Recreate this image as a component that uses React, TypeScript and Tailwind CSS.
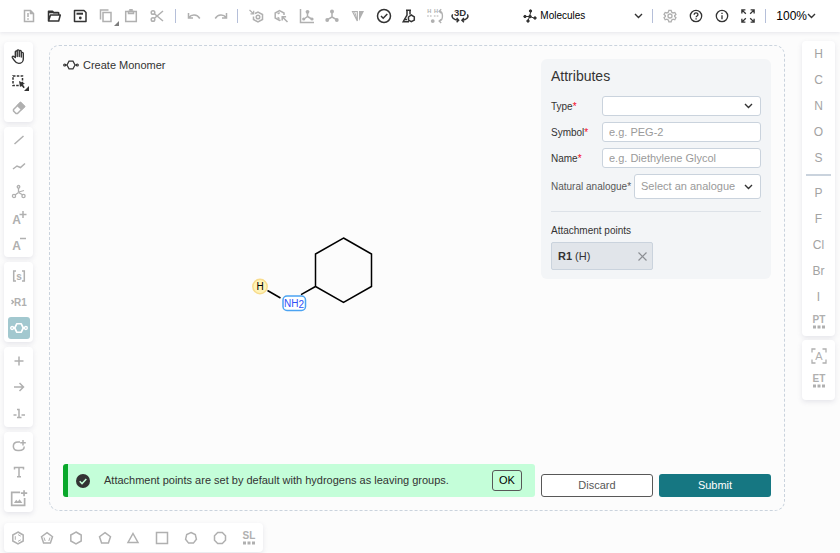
import React from 'react';

type IconProps = { children: React.ReactNode; size?: number; className?: string };

function Icon({ children, size = 16, className = '' }: IconProps) {
  return (
    <svg
      width={size}
      height={size}
      viewBox="0 0 16 16"
      fill="none"
      stroke="currentColor"
      strokeWidth="1.5"
      className={`block shrink-0 ${className}`}
      aria-hidden="true"
    >
      {children}
    </svg>
  );
}

type Tool = { name: string; icon: React.ReactNode; enabled?: boolean; active?: boolean; menu?: 'edge' | 'inset' };

function ToolButton({ tool, className }: { tool: Tool; className: string }) {
  const tone = tool.active ? 'text-white' : tool.enabled ? 'text-[#333333]' : 'text-[#b0b0b0]';
  return (
    <button type="button" aria-label={tool.name} className={`relative flex items-center justify-center ${tone} ${className}`}>
      {tool.active ? (
        <span className="flex size-[22px] items-center justify-center rounded-[3px] bg-[#a2c8cf]">{tool.icon}</span>
      ) : (
        tool.icon
      )}
      {tool.menu && (
        <svg
          className={`absolute ${tool.menu === 'edge' ? 'right-0 bottom-0' : 'right-1 bottom-1'}`}
          width="5"
          height="5"
          viewBox="0 0 5 5"
          aria-hidden="true"
        >
          <path d="M5 0v5H0z" fill={tool.enabled ? '#333333' : '#7d7d7d'} />
        </svg>
      )}
    </button>
  );
}

const glyph = { fill: 'currentColor', stroke: 'none', fontFamily: 'Liberation Sans, Arial, sans-serif', textAnchor: 'middle' as const };

const monomer = (
  <Icon size={18}>
    <path d="M4.2 8l1.9-3.8h3.8L11.8 8l-1.9 3.8H6.1z" strokeLinejoin="round" />
    <circle cx="1.9" cy="8" r="1.3" strokeWidth="1.2" />
    <circle cx="14.1" cy="8" r="1.3" strokeWidth="1.2" />
    <path d="M3.2 8h1M11.8 8h1" />
  </Icon>
);

const fileTools: Tool[] = [
  { name: 'Clear canvas', icon: <Icon><path d="M3.5 2.5h6l3 3v8h-9zM9.5 2.5v3h3" /><path d="M7 5v4M7 10.3v1.5" /></Icon> },
  { name: 'Open', enabled: true, icon: <Icon><path d="M2.5 13V3.2h4l1.2 1.5h5v2M2.5 13L4.5 7h9.8L12.7 13z" strokeLinejoin="round" /><path d="M2.5 4.5h10" /></Icon> },
  { name: 'Save', enabled: true, icon: <Icon><path d="M2.5 2.5h9.5l2 2v9H2.5z" strokeLinejoin="round" /><path d="M4.5 5.7h6.5" strokeWidth="2" /><circle cx="8.3" cy="10" r="1.4" fill="currentColor" stroke="none" /></Icon> },
  { name: 'Copy', menu: 'edge', icon: <Icon><path d="M5 4.5h8v9H5z" /><path d="M2.5 11.5V2h8" /></Icon> },
  { name: 'Paste', icon: <Icon><path d="M2.7 3.5h10.6v10H2.7z" /><path d="M5.5 3.5h5v2h-5zM7 3V1.7h2V3" /></Icon> },
  { name: 'Cut', icon: <Icon><circle cx="4" cy="4.5" r="1.8" /><circle cx="4" cy="11.5" r="1.8" /><path d="M5.4 5.7L14 13M5.4 10.3L14 3" /></Icon> },
];

const historyTools: Tool[] = [
  { name: 'Undo', icon: <Icon><path d="M2.5 5v5h4.5M2.7 9.7C5.5 6 11 6 13.8 10.5" /></Icon> },
  { name: 'Redo', icon: <Icon><path d="M13.5 5v5H9M13.3 9.7C10.5 6 5 6 2.2 10.5" /></Icon> },
];

const structureTools: Tool[] = [
  { name: 'Aromatize', icon: <Icon><path d="M7 5.5l3-1.5 4.5 2.5v5L10 14 5.5 11.5V8.5" /><circle cx="10" cy="9" r="1.8" /><path d="M1.5 2l4 3.7M5.7 2.7v3.2H2.5" strokeWidth="1.2" /></Icon> },
  { name: 'Dearomatize', icon: <Icon><path d="M7.5 12L6.5 12.5 2.2 10V5L6.5 2.5 11 5v2" /><path d="M4.7 5.9l2-1.3M4.5 9.5l2 1.2" /><path d="M14.5 14L9.5 9M9.2 12.5V8.7h3.9" /></Icon> },
  { name: 'Layout', icon: <Icon><path d="M1.5 1v13.5H15" /><path d="M8.5 5v4M8.5 8.5L5 11M8.5 8.5l4.2 2.5" /><g fill="currentColor" stroke="none"><circle cx="8.5" cy="3.8" r="1.9" /><circle cx="4.7" cy="11" r="1.6" /><circle cx="13" cy="11" r="1.6" /></g></Icon> },
  { name: 'Clean up', icon: <Icon><path d="M8 4.5V9M8 9l-4.5 2.7M8 9l4.5 2.7" /><g fill="currentColor" stroke="none"><circle cx="8" cy="3.5" r="2" /><circle cx="3.2" cy="12" r="1.9" /><circle cx="12.8" cy="12" r="1.9" /></g></Icon> },
  { name: 'Calculate CIP', icon: <Icon><path d="M2.5 3.5L7.3 13V3.5z" strokeWidth="1.2" /><path d="M4.5 3.5l2.5 8" strokeWidth="1" /><path d="M9 3h5L9 13z" fill="currentColor" stroke="none" /></Icon> },
  { name: 'Check structure', enabled: true, icon: <Icon><circle cx="8" cy="8" r="6.5" /><path d="M5 8l2.2 2.2L11.3 6" /></Icon> },
  { name: 'Calculated values', enabled: true, icon: <Icon><path d="M5 2.2h5M6 2.5V7L2.2 13.7H8M9 2.5v4" /><path d="M3.5 11.5H6" /><path d="M7.5 9l2.8-2 3 1.8v3.3l-3 1.6-2.8-1.6z" /></Icon> },
  { name: 'Hydrogens', icon: <Icon size={18}><text x="3" y="5.5" fontSize="5" fontWeight="bold" {...glyph}>H</text><text x="9" y="5.5" fontSize="5" fontWeight="bold" {...glyph}>H</text><path d="M1 8h4M7 8h4" strokeDasharray="1.5 1" strokeWidth="1" /><circle cx="6" cy="12.5" r="1.7" fill="currentColor" stroke="none" /><path d="M12 4c3.5 0 3.5 8 0 8.5M13.5 2L11.7 4l2 1.5M13.5 11l-1.8 1.5 1.8 1.7" strokeWidth="1.2" /></Icon> },
  { name: '3D viewer', enabled: true, icon: <Icon size={18}><text x="8" y="8" fontSize="8.5" fontWeight="bold" {...glyph}>3D</text><path d="M1.5 6.5C-.3 9 2.5 11.5 6.5 11.7M14.5 6.5c1.8 2.5-1 5-4.5 5.2M5 9.8l1.8 2L5 13.5M11.5 9.8l-1.8 2 1.8 1.7" strokeWidth="1.3" /></Icon> },
];

const dots = <path d="M2 13h12" stroke="currentColor" strokeWidth="3" strokeDasharray="3 1.5" />;

const leftGroups: Tool[][] = [
  [
    { name: 'Hand', enabled: true, icon: <Icon size={17}><path d="M5 9V3.7c0-1.3 1.8-1.3 1.8 0V8 2.7c0-1.3 1.9-1.3 1.9 0V8 3.3c0-1.2 1.9-1.2 1.9 0V8.5 5c0-1.2 1.9-1.2 1.9 0v5.5c0 2-1.7 4-4.3 4-2.2 0-3-1-4.2-2.8L2.2 9c-.5-1.2.7-1.7 1.4-1z" strokeWidth="1.3" strokeLinejoin="round" /></Icon> },
    { name: 'Rectangle selection', enabled: true, menu: 'inset', icon: <Icon><path d="M2 2h9.5v9.5H2z" strokeDasharray="2.5 1.3" /><path d="M8 7l6 2.7-2.2.8 2 2.7-1.3 1-2-2.7-1.5 1.6z" fill="currentColor" stroke="none" /></Icon> },
    { name: 'Erase', icon: <Icon><path d="M2.5 9.5l7-7 4 4-7 7h-1.5L2.5 11z" strokeLinejoin="round" /><path d="M6.5 5.5l3-3 4 4-3 3z" fill="currentColor" /></Icon> },
  ],
  [
    { name: 'Single bond', icon: <Icon><path d="M3.5 12l9-8" /></Icon> },
    { name: 'Chain', icon: <Icon><path d="M2 11l4-3 3.5 1.5L14 5.5" /></Icon> },
    { name: 'Stereochemistry', icon: <Icon><g strokeWidth="1.3"><path d="M7.5 4v4M7.5 8.5L4 11M7.5 8.5L12 11M8 8l5-1.5" /><circle cx="7.5" cy="2.8" r="1.3" /><circle cx="3" cy="12" r="1.6" /><circle cx="12.5" cy="12" r="1.6" /></g></Icon> },
    { name: 'Charge plus', icon: <Icon><text x="5.5" y="14" fontSize="12" fontWeight="bold" {...glyph}>A</text><path d="M12 1v7M8.5 4.500h7" /></Icon> },
    { name: 'Charge minus', icon: <Icon><text x="5.5" y="14" fontSize="12" fontWeight="bold" {...glyph}>A</text><path d="M9 2.5h6" /></Icon> },
  ],
  [
    { name: 'S-Group', icon: <Icon><path d="M5 3H2.7v10H5M11 3h2.3v10H11" /><text x="8" y="11.5" fontSize="10" fontWeight="bold" {...glyph}>s</text></Icon> },
    { name: 'R-Group label', icon: <Icon><path d="M.5 6l2 2-2 2" /><text x="9.5" y="12" fontSize="10" fontWeight="bold" {...glyph}>R1</text></Icon> },
    { name: 'Create monomer', active: true, icon: monomer },
  ],
  [
    { name: 'Reaction plus', icon: <Icon><path d="M8 3.5v9M3.5 8h9" /></Icon> },
    { name: 'Arrow', icon: <Icon><path d="M3 8h9.5M8.5 4l4 4-4 4" /></Icon> },
    { name: 'Reaction mapping', icon: <Icon><path d="M6 4.5h2v8M6 12.5h4.5M2.5 10h3M10.5 10H14" /></Icon> },
  ],
  [
    { name: 'Ellipse', icon: <Icon><path d="M9 4H7C.8 4 .8 12.5 7 12.5h1c3.500 0 5.2-1.7 5.2-4" /><path d="M12 2v5.5M9.2 4.7h5.6" /></Icon> },
    { name: 'Text', icon: <Icon><path d="M3.5 5.5V3.5h9v2M8 3.5v9M6 12.7h4" /></Icon> },
    { name: 'Image', icon: <Icon size={18}><path d="M9 3H1.5v11.5H13V8" /><path d="M12.5 1v5.5M9.7 3.7h5.6" /><path d="M3.5 12.5l2-3 1.5 1.5 1.5-2 2.5 3.5z" fill="currentColor" stroke="none" /></Icon> },
  ],
];

const templates: Tool[] = [
  { name: 'Benzene', icon: <Icon><path d="M8 2l5.2 3v6L8 14l-5.2-3V5z" /><path d="M5.300 6.200v3.600M8 4.600l2.800 1.600M8 11.400l2.800-1.600" strokeWidth="1" /></Icon> },
  { name: 'Cyclopentadiene', icon: <Icon><path d="M8 2.7l5.5 4-2.1 6.3H4.6L2.5 6.7z" /><path d="M5 7.5l1.200 3.500M11 7.5l-1.200 3.500" strokeWidth="1" /></Icon> },
  { name: 'Cyclohexane', icon: <Icon><path d="M8 2l5.2 3v6L8 14l-5.2-3V5z" /></Icon> },
  { name: 'Cyclopentane', icon: <Icon><path d="M8 2.7l5.5 4-2.1 6.3H4.6L2.5 6.7z" /></Icon> },
  { name: 'Cyclopropane', icon: <Icon><path d="M8 3.5l5 9H3z" /></Icon> },
  { name: 'Cyclobutane', icon: <Icon><path d="M2.5 2.5h11v11h-11z" /></Icon> },
  { name: 'Cycloheptane', icon: <Icon><path d="M8 2.5l4.3 2 1.1 4.7-3 3.9H5.600l-3-3.9 1.1-4.7z" /></Icon> },
  { name: 'Cyclooctane', icon: <Icon><path d="M5.7 2.5h4.6l3.2 3.2v4.6l-3.2 3.2H5.7l-3.2-3.2V5.7z" /></Icon> },
  { name: 'Structure library', icon: <Icon><text x="8" y="9" fontSize="10" fontWeight="bold" {...glyph}>SL</text>{dots}</Icon> },
];

function Chevron({ className = '' }: { className?: string }) {
  return (
    <svg width="9" height="6" viewBox="0 0 9 6" fill="none" stroke="#333333" strokeWidth="1.4" className={`pointer-events-none shrink-0 ${className}`} aria-hidden="true">
      <path d="M1 1l3.5 3.5L8 1" />
    </svg>
  );
}

const Divider = () => <span className="h-[14px] w-px bg-[#b5bfd9]" />;

function Header() {
  return (
    <header className="flex h-8 items-center justify-between bg-white pr-6 pl-4 shadow-[0_1px_4px_rgba(103,104,132,0.15)]">
      <div className="flex items-center">
        <div className="grid w-[154px] grid-cols-6">
          {fileTools.map((t) => <ToolButton key={t.name} tool={t} className="h-5" />)}
        </div>
        <span className="w-[5px]" />
        <Divider />
        <span className="w-1" />
        <div className="grid w-[54px] grid-cols-2">
          {historyTools.map((t) => <ToolButton key={t.name} tool={t} className="h-5" />)}
        </div>
        <span className="w-[3px]" />
        <Divider />
        <span className="w-[5px]" />
        <div className="grid w-[230px] grid-cols-9">
          {structureTools.map((t) => <ToolButton key={t.name} tool={t} className="h-5" />)}
        </div>
      </div>
      <div className="flex items-center">
        <svg width="14" height="14" viewBox="0 0 14 14" fill="#333333" stroke="#333333" aria-hidden="true">
          <path d="M1.5 7.5h5L8 2M6.5 7.5L5 12M7 7.5l5 2" fill="none" />
          <circle cx="7.5" cy="2" r="1.2" /><circle cx="2" cy="7.5" r="1.2" /><circle cx="7" cy="7.5" r="1.3" /><circle cx="5" cy="12" r="1.2" /><circle cx="12" cy="9" r="1.2" />
        </svg>
        <div className="relative flex items-center">
          <select aria-label="Mode" className="w-28 appearance-none bg-transparent pl-[3px] text-[10px] leading-4 text-black">
            <option>Molecules</option>
          </select>
          <Chevron className="absolute right-[6px]" />
        </div>
        <span className="w-[3px]" />
        <Divider />
        <div className="ml-1 flex">
          <button type="button" aria-label="Settings" className="flex w-[26px] justify-center text-[#b0b0b0]">
            <Icon size={14}>
              <path d="M6.7 1.5h2.6l.5 2 1.7 1 2-.6 1.3 2.3-1.5 1.4v1l1.5 1.4-1.3 2.3-2-.6-1.7 1-.5 2H6.7l-.5-2-1.7-1-2 .6-1.3-2.3 1.5-1.4v-1L1.200 6.2l1.3-2.3 2 .6 1.7-1z" />
              <circle cx="8" cy="8" r="2.3" />
            </Icon>
          </button>
          <button type="button" aria-label="Help" className="flex w-[26px] justify-center text-[#333333]">
            <Icon size={14}><circle cx="8" cy="8" r="6.5" /><path d="M5.9 6.7c0-2.9 4.3-2.9 4.3-.2 0 1.5-2.1 1.5-2.1 3M8.1 10.7v1.4" /></Icon>
          </button>
          <button type="button" aria-label="About" className="flex w-[26px] justify-center text-[#333333]">
            <Icon size={14}><circle cx="8" cy="8" r="6.5" /><path d="M8 7v4.7M8 4.3v1.5" /></Icon>
          </button>
          <button type="button" aria-label="Fullscreen" className="flex w-[26px] justify-center text-[#333333]">
            <Icon size={14}><path d="M1 5V1h4M1 1l4.5 4.5M11 1h4v4M15 1l-4.5 4.5M1 11v4h4M1 15l4.5-4.5M15 11v4h-4M15 15l-4.5-4.5" /></Icon>
          </button>
        </div>
        <span className="w-1" />
        <Divider />
        <button type="button" className="ml-[10px] flex items-center text-xs text-black">
          100%
          <Chevron />
        </button>
      </div>
    </header>
  );
}

const card = 'rounded bg-white shadow-[0_2px_5px_rgba(103,104,132,0.15)]';

function LeftToolbar() {
  return (
    <nav aria-label="Drawing tools" className="flex w-[29px] shrink-0 flex-col gap-[5px] pt-[10px]">
      {leftGroups.map((group) => (
        <div key={group[0].name} className={`${card} flex flex-col ${group.length === 3 ? 'py-px' : ''}`}>
          {group.map((t) => <ToolButton key={t.name} tool={t} className="h-[26px]" />)}
        </div>
      ))}
    </nav>
  );
}

function AtomButton({ symbol }: { symbol: string }) {
  return <button type="button" className="h-[26px] w-full text-center text-xs text-[#a3a3a3]">{symbol}</button>;
}

function RightToolbar() {
  return (
    <nav aria-label="Atoms" className="flex w-[33px] shrink-0 flex-col gap-1 pt-[9px]">
      <div className={`${card} flex flex-col items-center pb-[2px]`}>
        {['H', 'C', 'N', 'O', 'S'].map((s) => <AtomButton key={s} symbol={s} />)}
        <span className="mt-[3px] mb-1 h-[2px] w-[25px] bg-[#cad3dd]" />
        {['P', 'F', 'Cl', 'Br', 'I'].map((s) => <AtomButton key={s} symbol={s} />)}
        <ToolButton tool={{ name: 'Periodic table', icon: <Icon><text x="8" y="9" fontSize="10" fontWeight="bold" {...glyph}>PT</text>{dots}</Icon> }} className="h-6" />
      </div>
      <div className={`${card} flex flex-col items-center pt-[3px] pb-[7px]`}>
        <ToolButton tool={{ name: 'Any atom', icon: <Icon><path d="M1 4.5V1h3.5M11.5 1H15v3.5M15 11.5V15h-3.5M4.5 15H1v-3.5" strokeWidth="1.3" /><text x="8" y="12" fontSize="11" {...glyph}>A</text></Icon> }} className="h-[26px]" />
        <ToolButton tool={{ name: 'Extended table', icon: <Icon><text x="8" y="9" fontSize="10" fontWeight="bold" {...glyph}>ET</text>{dots}</Icon> }} className="h-6" />
      </div>
    </nav>
  );
}

function Molecule() {
  return (
    <svg width="128" height="80" viewBox="248 234 128 80" role="img" aria-label="Cyclohexylamine" fontFamily="Liberation Sans, Arial, sans-serif">
      <path d="M343.5 238l28 16v32.5l-28 16-28-16V254zM315.5 286.5L301 294.7M267.5 290.5l13 7.5" fill="none" stroke="#000" strokeWidth="1.5" />
      <circle cx="260" cy="286.5" r="7.2" fill="#fff3b8" stroke="#f8dc8c" strokeWidth="1.5" />
      <text x="260" y="290" fontSize="10" textAnchor="middle">H</text>
      <rect x="283" y="296" width="22.5" height="14.5" rx="4" fill="#fff" stroke="#4ba3f2" strokeWidth="1.5" />
      <text x="284" y="307" fontSize="10" fill="#304ff7">NH<tspan dy="1">2</tspan></text>
    </svg>
  );
}

const field = 'rounded-[3px] border border-[#cad3dd] bg-white text-[11px] text-[#333333] placeholder:text-[#9a9a9a]';

const Required = () => <span className="text-[#f40724]">*</span>;

function Attributes() {
  return (
    <section className="rounded-md bg-[#f3f5f7] px-[10px] pt-2 pb-[9px]">
      <h2 className="text-sm leading-[18px] text-[#333333]">Attributes</h2>
      <div className="mt-[11px] flex flex-col gap-[6px] text-[10px] text-[#333333]">
        <div className="flex items-center">
          <label htmlFor="type" className="w-[51px]">Type<Required /></label>
          <div className="relative flex min-w-0 flex-1 items-center">
            <select id="type" defaultValue="" className={`${field} h-5 w-full appearance-none px-[6px]`}>
              <option value="" />
            </select>
            <Chevron className="absolute right-2" />
          </div>
        </div>
        <div className="flex items-center">
          <label htmlFor="symbol" className="w-[51px]">Symbol<Required /></label>
          <input id="symbol" placeholder="e.g. PEG-2" className={`${field} h-5 min-w-0 flex-1 px-[6px]`} />
        </div>
        <div className="flex items-center">
          <label htmlFor="name" className="w-[51px]">Name<Required /></label>
          <input id="name" placeholder="e.g. Diethylene Glycol" className={`${field} h-5 min-w-0 flex-1 px-[6px]`} />
        </div>
        <div className="flex items-center">
          <label htmlFor="analogue" className="w-[83px] text-[#585858]">Natural analogue*</label>
          <div className="relative flex min-w-0 flex-1 items-center">
            <select id="analogue" defaultValue="" className="h-[25px] w-full appearance-none rounded-[3px] border border-[#cad3dd] bg-white pl-[6px] text-[11px] text-[#9a9a9a]">
              <option value="">Select an analogue</option>
            </select>
            <Chevron className="absolute right-2" />
          </div>
        </div>
      </div>
      <hr className="mt-3 border-[#dde2e8]" />
      <h3 className="mt-3 text-[10px] leading-[14px] text-[#333333]">Attachment points</h3>
      <div className="mt-1 flex h-7 w-[102px] items-center justify-between rounded-[2px] border border-[#cad3dd] bg-[#e1e5ea] pr-[5px] pl-[6px] text-[11px] text-[#333333]">
        <span><b>R1</b> (H)</span>
        <button type="button" aria-label="Remove R1">
          <svg width="9" height="9" viewBox="0 0 9 9" stroke="#8c8f94" strokeWidth="1.2" aria-hidden="true"><path d="M.5.5l8 8M8.5.5l-8 8" /></svg>
        </button>
      </div>
    </section>
  );
}

function Canvas() {
  return (
    <main className="mt-[13px] mr-[17px] mb-px ml-4 flex min-w-0 flex-1 gap-[6px] rounded-[10px] border border-dashed border-[#cad3dd] p-[13px]">
      <div className="flex min-w-0 flex-1 flex-col">
        <h1 className="flex h-3 items-center gap-1 text-[11px] text-[#333333]">
          <svg width="16" height="10" viewBox="0 0 16 10" fill="none" stroke="#333333" strokeWidth="1.2" aria-hidden="true">
            <path d="M4 5l2-3.8h4L12 5l-2 3.8H6z" />
            <circle cx="1.7" cy="5" r="1" /><circle cx="14.3" cy="5" r="1" /><path d="M2.7 5H4M12 5h1.3" />
          </svg>
          Create Monomer
        </h1>
        <div className="flex flex-1 items-center justify-center pt-3 pl-[26px]">
          <Molecule />
        </div>
        <div role="status" className="flex h-[33px] items-center rounded-[3px] border-l-[5px] border-[#09a82b] bg-[#c4fed9] pr-[13px] pl-2 text-[11px] text-[#333333]">
          <svg width="14" height="14" viewBox="0 0 14 14" aria-hidden="true">
            <circle cx="7" cy="7" r="7" fill="#333333" />
            <path d="M3.7 7.3l2.3 2.3 4.3-4.7" fill="none" stroke="#c4fed9" strokeWidth="1.5" />
          </svg>
          <p className="ml-[14px] flex-1">Attachment points are set by default with hydrogens as leaving groups.</p>
          <button type="button" className="h-[21px] w-[30px] rounded-[3px] border border-[#585858] text-black">OK</button>
        </div>
      </div>
      <aside className="flex w-[230px] shrink-0 flex-col justify-between">
        <Attributes />
        <div className="grid grid-cols-2 gap-[6px] text-[11px]">
          <button type="button" className="h-[23px] rounded-[3px] border border-[#585858] bg-white text-[#585858]">Discard</button>
          <button type="button" className="h-[23px] rounded-[3px] bg-[#167782] text-white">Submit</button>
        </div>
      </aside>
    </main>
  );
}

export default function App() {
  return (
    <div className="flex min-h-screen flex-col bg-[#fcfcfc] font-['Liberation_Sans',Arial,sans-serif]">
      <Header />
      <div className="flex flex-1 pr-[5px] pl-1">
        <LeftToolbar />
        <Canvas />
        <RightToolbar />
      </div>
      <footer className="mt-[11px] mb-px ml-1 flex">
        <div className={`${card} grid w-[259px] grid-cols-9`}>
          {templates.map((t) => <ToolButton key={t.name} tool={t} className="h-[29px]" />)}
        </div>
      </footer>
    </div>
  );
}
